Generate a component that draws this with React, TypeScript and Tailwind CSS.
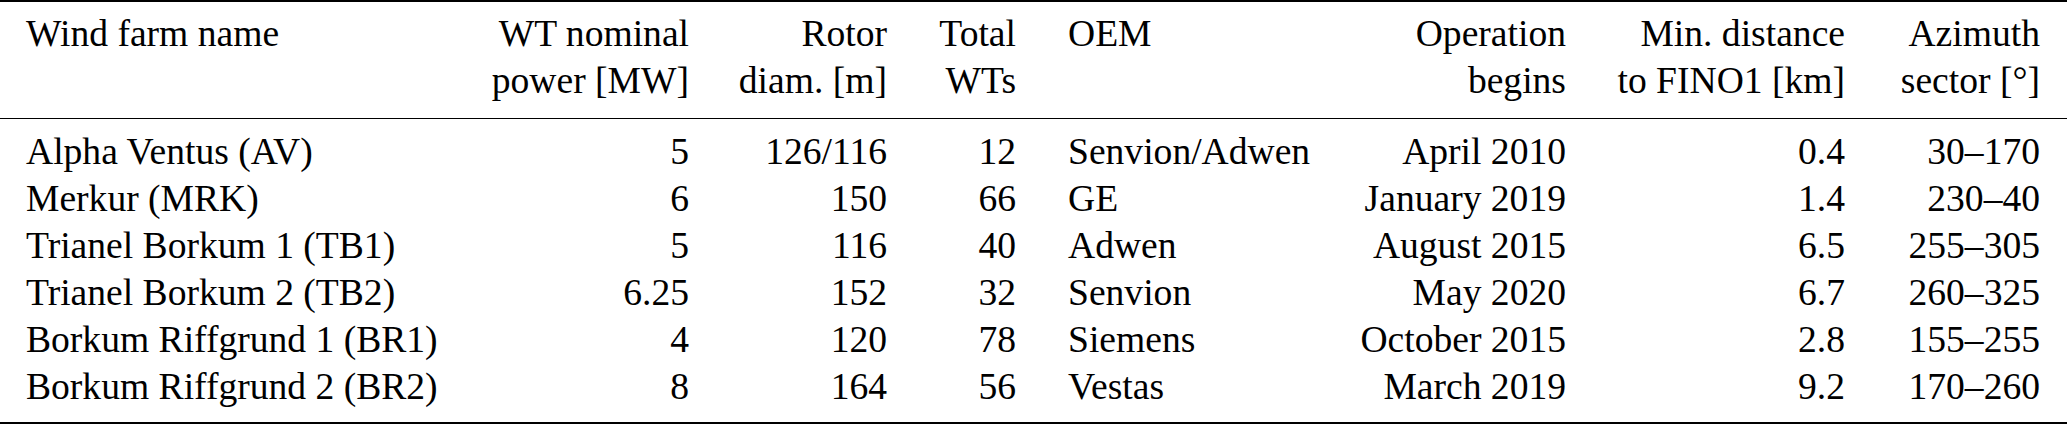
interface FarmRow {
  name: string;
  power: string;
  rotor: string;
  total: string;
  oem: string;
  begins: string;
  distance: string;
  azimuth: string;
}

const rows: FarmRow[] = [
  { name: "Alpha Ventus (AV)", power: "5", rotor: "126/116", total: "12", oem: "Senvion/Adwen", begins: "April 2010", distance: "0.4", azimuth: "30–170" },
  { name: "Merkur (MRK)", power: "6", rotor: "150", total: "66", oem: "GE", begins: "January 2019", distance: "1.4", azimuth: "230–40" },
  { name: "Trianel Borkum 1 (TB1)", power: "5", rotor: "116", total: "40", oem: "Adwen", begins: "August 2015", distance: "6.5", azimuth: "255–305" },
  { name: "Trianel Borkum 2 (TB2)", power: "6.25", rotor: "152", total: "32", oem: "Senvion", begins: "May 2020", distance: "6.7", azimuth: "260–325" },
  { name: "Borkum Riffgrund 1 (BR1)", power: "4", rotor: "120", total: "78", oem: "Siemens", begins: "October 2015", distance: "2.8", azimuth: "155–255" },
  { name: "Borkum Riffgrund 2 (BR2)", power: "8", rotor: "164", total: "56", oem: "Vestas", begins: "March 2019", distance: "9.2", azimuth: "170–260" },
];

// column tracks include the inter-column space on the left of each column
const grid =
  "grid grid-cols-[414px_249px_198px_129px_294px_256px_279px_195px] pl-[26px] pr-[27px]";

const Row = ({ r }: { r: FarmRow }) => (
  <>
    <div>{r.name}</div>
    <div className="text-right">{r.power}</div>
    <div className="text-right">{r.rotor}</div>
    <div className="text-right">{r.total}</div>
    <div className="pl-[52px]">{r.oem}</div>
    <div className="text-right">{r.begins}</div>
    <div className="text-right">{r.distance}</div>
    <div className="text-right">{r.azimuth}</div>
  </>
);

export default function App() {
  return (
    <div className="w-[2067px] h-[424px] bg-white text-black font-['Liberation_Serif'] text-[37.6px] leading-[47px] whitespace-nowrap">
      <div className="h-[2px] bg-black" />

      <div className={`${grid} pt-[8px] pb-[14px]`}>
        <div>Wind farm name</div>
        <div className="text-right">
          WT nominal
          <br />
          power [MW]
        </div>
        <div className="text-right">
          Rotor
          <br />
          diam. [m]
        </div>
        <div className="text-right">
          Total
          <br />
          WTs
        </div>
        <div className="pl-[52px]">OEM</div>
        <div className="text-right">
          Operation
          <br />
          begins
        </div>
        <div className="text-right">
          Min. distance
          <br />
          to FINO1 [km]
        </div>
        <div className="text-right">
          Azimuth
          <br />
          sector [°]
        </div>
      </div>

      <div className="h-px bg-black" />

      <div className={`${grid} pt-[9px] pb-[12px]`}>
        {rows.map((r, i) => (
          <Row key={i} r={r} />
        ))}
      </div>

      <div className="h-[2px] bg-black" />
    </div>
  );
}
